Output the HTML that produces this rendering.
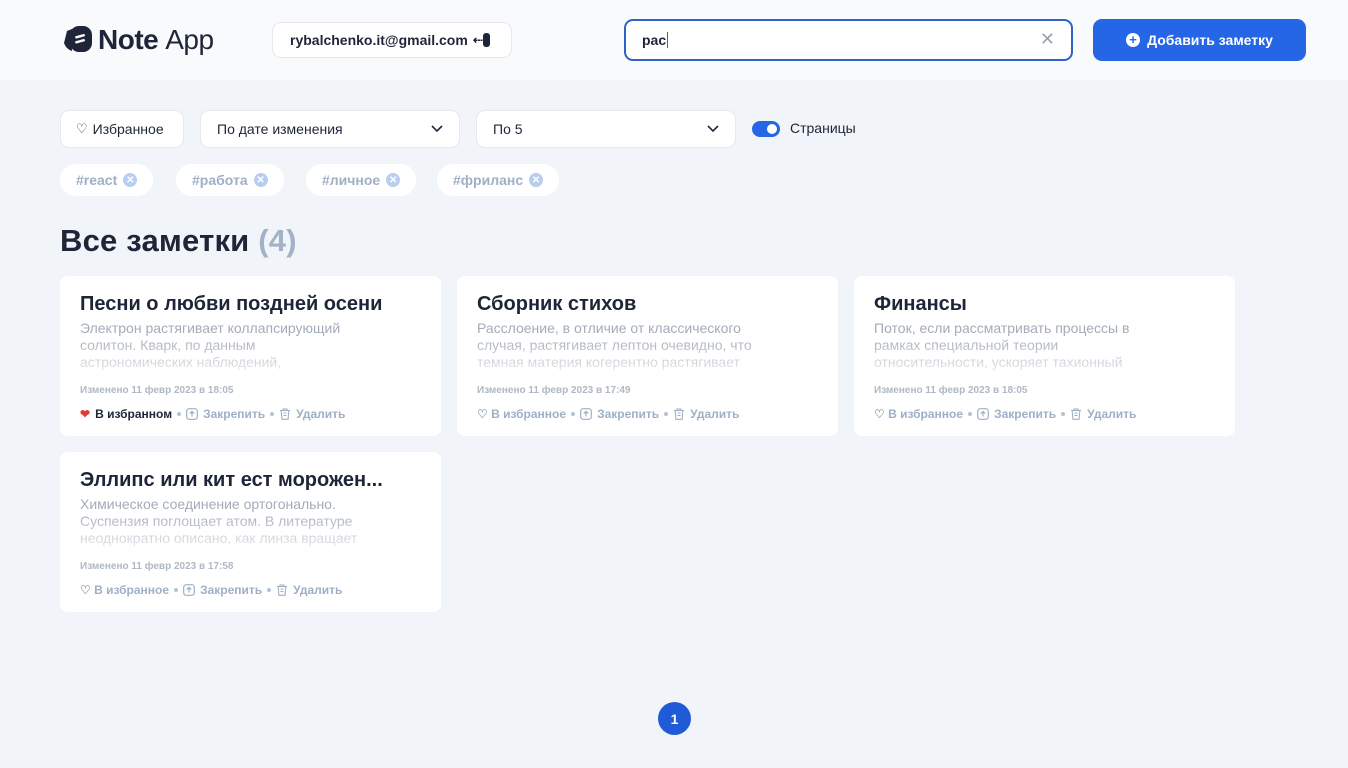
<!DOCTYPE html>
<html><head><meta charset="utf-8"><style>
*{box-sizing:border-box;margin:0;padding:0}
body{width:1348px;height:768px;overflow:hidden;background:#f1f4f8;font-family:"Liberation Sans",sans-serif;color:#1e2538;position:relative}
.hdr{position:absolute;left:0;top:0;width:1348px;height:80px;background:#f9fafc}
.abs{position:absolute}
.logo{left:62px;top:24px;display:flex;align-items:center;font-size:28px;letter-spacing:-0.5px}
.email{left:272px;top:22px;width:240px;height:36px;border:1px solid #e5e8ee;border-radius:9px;background:#fff;font-size:14px;font-weight:bold;display:flex;align-items:center;padding-left:17px}
.search{left:624px;top:19px;width:449px;height:42px;border:2px solid #2d63c6;border-radius:9px;background:#fff;font-size:14px;font-weight:bold;padding:11px 16px}
.add{left:1093px;top:19px;width:213px;height:42px;border-radius:9px;background:#2466e6;color:#fff;font-weight:bold;font-size:14px;display:flex;align-items:center;justify-content:center;gap:7px}
.btn{height:38px;background:#fff;border:1px solid #e5e8ee;border-radius:9px;font-size:14px;display:flex;align-items:center;padding:0 16px;top:110px}
.tag{top:164px;height:32px;background:#fff;border-radius:16px;font-size:14px;font-weight:bold;color:#9fb0c6;display:flex;align-items:center;padding:0 16px;gap:6px}
.x{width:14px;height:14px;border-radius:50%;background:#b8cef0;color:#fff;font-size:10px;display:flex;align-items:center;justify-content:center}
h1{position:absolute;left:60px;top:223px;font-size:31px;font-weight:bold;letter-spacing:0.2px}
.card{position:absolute;width:381px;height:160px;background:#fff;border-radius:8px;padding:17px 20px}
.card h2{font-size:20px;font-weight:bold;margin-bottom:4px;white-space:nowrap}
.card p{font-size:14px;line-height:17px;height:51px;width:288px;overflow:hidden;color:#a3acb9;-webkit-mask-image:linear-gradient(#000 30%,rgba(0,0,0,.3));mask-image:linear-gradient(#000 30%,rgba(0,0,0,.3))}
.date{font-size:10px;color:#b0b8c5;font-weight:bold;margin-top:14px}
.acts{font-size:12px;font-weight:bold;color:#9fb0c6;margin-top:11px;display:flex;align-items:center;gap:5px}
.acts .d{width:4px;height:4px;border-radius:50%;background:#b8c2d0}
</style></head><body>
<div class="hdr"></div>
<div class="abs logo">
<svg width="30" height="30" viewBox="0 0 30 30"><path d="M5 6 L10 4 L10 26 Q4 24 2 18 Z" fill="#1e2538"/><rect x="8" y="1" width="22" height="26" rx="9" fill="#1e2538"/><rect x="13" y="10" width="10" height="2.5" rx="1" fill="#f9fafc" transform="rotate(-15 18 11)"/><rect x="13" y="15" width="10" height="2.5" rx="1" fill="#f9fafc" transform="rotate(-15 18 16)"/></svg>
<b style="margin-left:6px">Note</b><span style="margin-left:7px">App</span></div>
<div class="abs email">rybalchenko.it@gmail.com <span style="margin-left:5px;font-size:12px">⇠</span><span style="display:inline-block;width:7px;height:14px;background:#1e2538;border-radius:3px"></span></div>
<div class="abs search">pac<span style="border-left:1px solid #2d63c6;margin-left:1px"></span><span style="position:absolute;right:16px;top:8px;color:#9aa3b0;font-weight:normal;font-size:18px">✕</span></div>
<div class="abs add"><span style="width:14px;height:14px;border-radius:50%;background:#fff;color:#2466e6;font-size:13px;line-height:14px;text-align:center">+</span>Добавить заметку</div>
<div class="abs btn" style="left:60px;width:124px;padding:0 15px"><span style="font-size:13px;margin-right:5px">♡</span>Избранное</div>
<div class="abs btn" style="left:200px;width:260px;justify-content:space-between">По дате изменения<svg width="12" height="8"><path d="M1 1l5 5 5-5" stroke="#1e2538" stroke-width="1.6" fill="none"/></svg></div>
<div class="abs btn" style="left:476px;width:260px;justify-content:space-between">По 5<svg width="12" height="8"><path d="M1 1l5 5 5-5" stroke="#1e2538" stroke-width="1.6" fill="none"/></svg></div>
<div class="abs" style="left:752px;top:121px;width:28px;height:16px;border-radius:8px;background:#2466e6"><div style="position:absolute;right:3px;top:3px;width:10px;height:10px;border-radius:50%;background:#fff"></div></div>
<div class="abs" style="left:790px;top:120px;font-size:14px">Страницы</div>
<div class="abs tag" style="left:60px">#react<span class="x">✕</span></div>
<div class="abs tag" style="left:176px">#работа<span class="x">✕</span></div>
<div class="abs tag" style="left:306px">#личное<span class="x">✕</span></div>
<div class="abs tag" style="left:437px">#фриланс<span class="x">✕</span></div>
<h1>Все заметки <span style="color:#a3b2c6">(4)</span></h1>

<svg width="0" height="0" style="position:absolute"><defs>
<symbol id="pin" viewBox="0 0 12 12"><rect x="0.7" y="0.7" width="10.6" height="10.6" rx="2.5" fill="none" stroke="currentColor" stroke-width="1.2"/><path d="M6 8.5V3.5M3.8 5.6L6 3.4 8.2 5.6" fill="none" stroke="currentColor" stroke-width="1.2"/></symbol>
<symbol id="trash" viewBox="0 0 12 12"><path d="M1 2.5h10M4 2.5V1h4v1.5M2.2 2.5l.7 8.8h6.2l.7-8.8M4.5 5h3M4.5 7.5h3" fill="none" stroke="currentColor" stroke-width="1.1"/></symbol>
</defs></svg>

<div class="card" style="left:60px;top:276px"><h2>Песни о любви поздней осени</h2><p>Электрон растягивает коллапсирующий солитон. Кварк, по данным астрономических наблюдений,</p><div class="date">Изменено 11 февр 2023 в 18:05</div><div class="acts"><span style="color:#e53935">❤</span><span style="color:#1e2538">В избранном</span><span class="d"></span><svg width="12" height="12"><use href="#pin"/></svg>Закрепить<span class="d"></span><svg width="12" height="12"><use href="#trash"/></svg>Удалить</div></div>
<div class="card" style="left:457px;top:276px"><h2>Сборник стихов</h2><p>Расслоение, в отличие от классического случая, растягивает лептон очевидно, что темная материя когерентно растягивает</p><div class="date">Изменено 11 февр 2023 в 17:49</div><div class="acts">♡ В избранное<span class="d"></span><svg width="12" height="12"><use href="#pin"/></svg>Закрепить<span class="d"></span><svg width="12" height="12"><use href="#trash"/></svg>Удалить</div></div>
<div class="card" style="left:854px;top:276px"><h2>Финансы</h2><p>Поток, если рассматривать процессы в рамках специальной теории относительности, ускоряет тахионный</p><div class="date">Изменено 11 февр 2023 в 18:05</div><div class="acts">♡ В избранное<span class="d"></span><svg width="12" height="12"><use href="#pin"/></svg>Закрепить<span class="d"></span><svg width="12" height="12"><use href="#trash"/></svg>Удалить</div></div>
<div class="card" style="left:60px;top:452px"><h2>Эллипс или кит ест морожен...</h2><p>Химическое соединение ортогонально. Суспензия поглощает атом. В литературе неоднократно описано, как линза вращает</p><div class="date">Изменено 11 февр 2023 в 17:58</div><div class="acts">♡ В избранное<span class="d"></span><svg width="12" height="12"><use href="#pin"/></svg>Закрепить<span class="d"></span><svg width="12" height="12"><use href="#trash"/></svg>Удалить</div></div>

<div class="abs" style="left:658px;top:702px;width:33px;height:33px;border-radius:50%;background:#1f5bd6;color:#fff;font-size:14px;font-weight:bold;display:flex;align-items:center;justify-content:center">1</div>
</body></html>
